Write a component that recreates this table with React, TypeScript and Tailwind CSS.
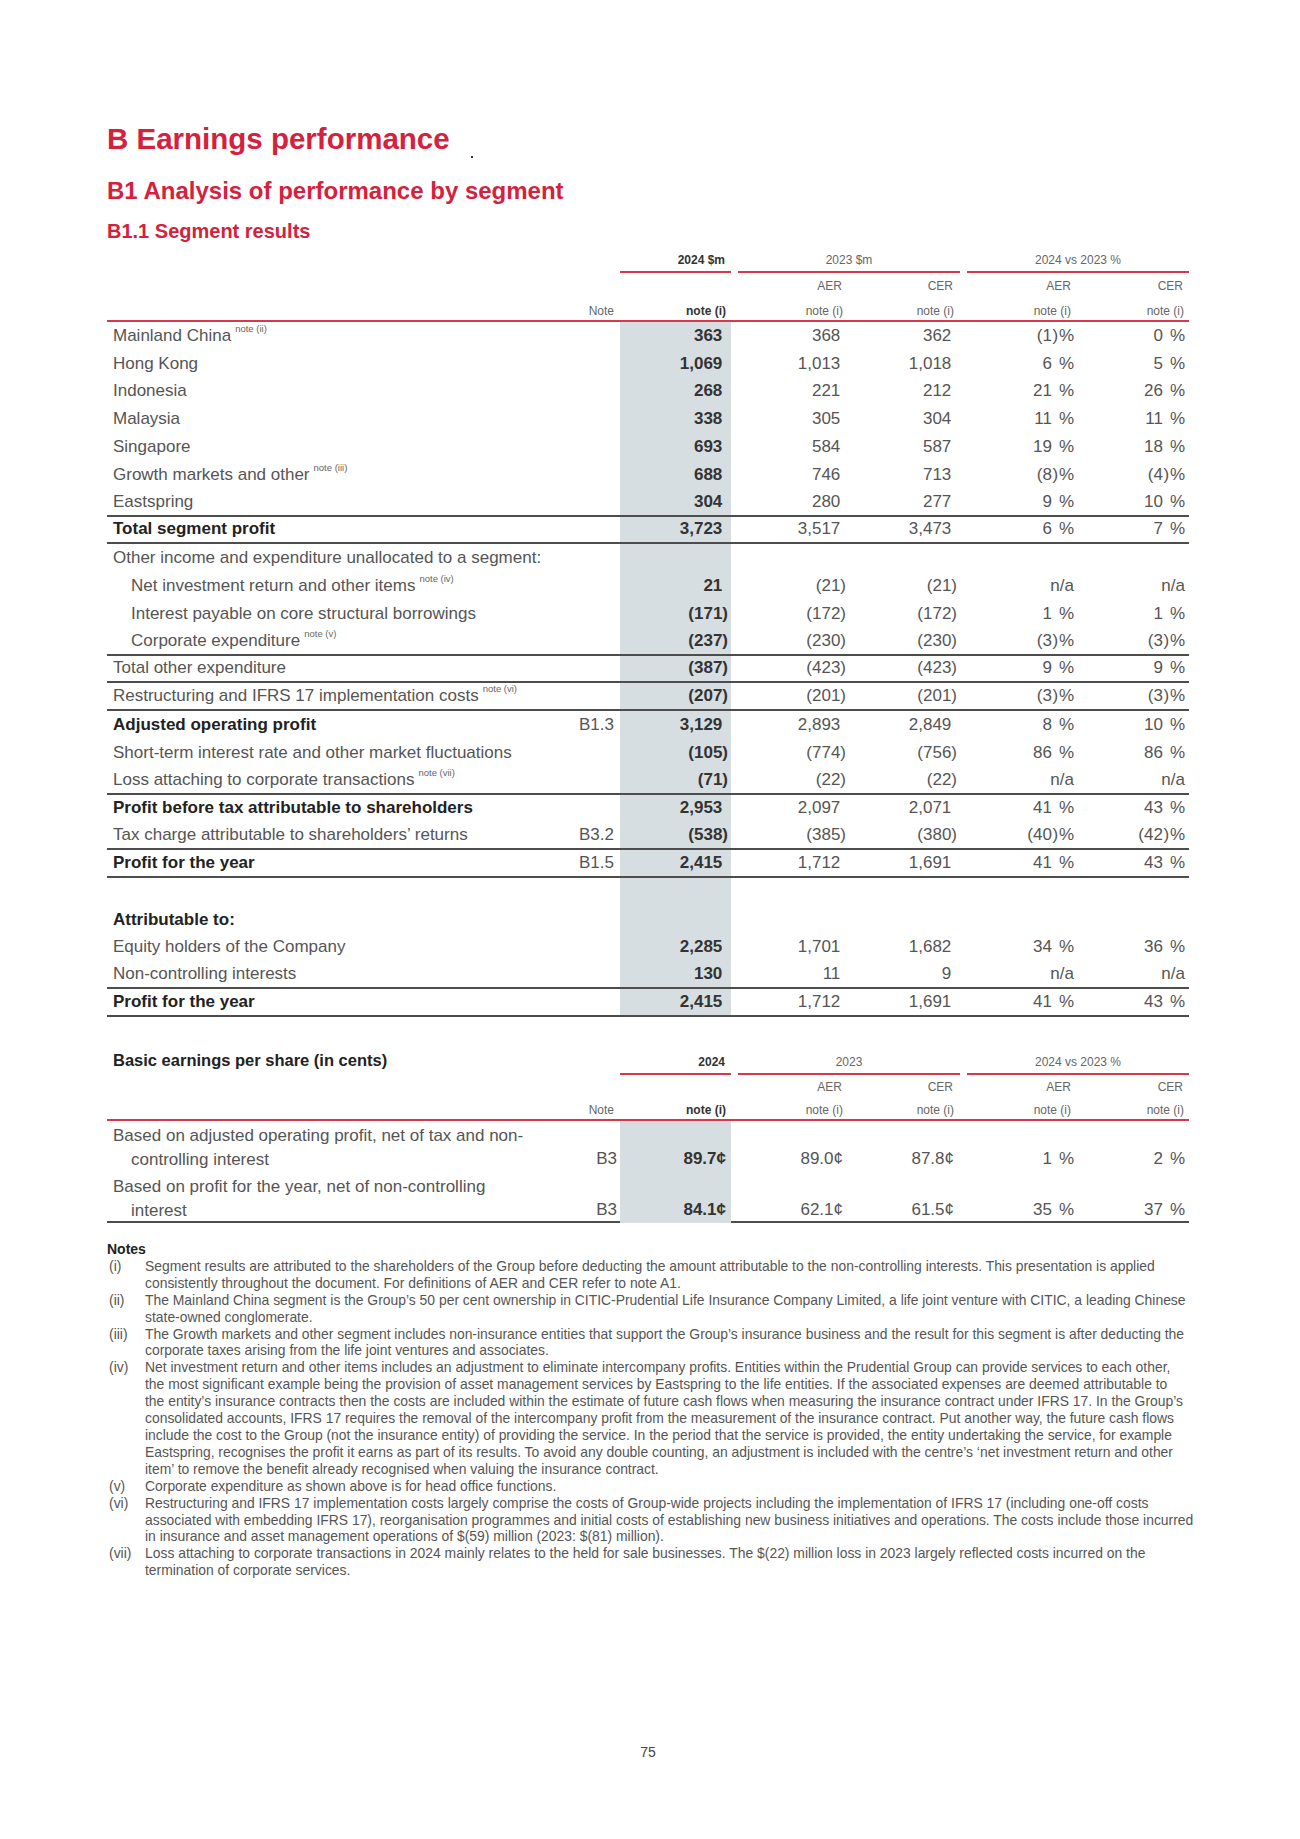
import React from 'react';

type R = {
  label?: string;
  sup?: string;
  note?: string;
  bold?: boolean;
  indent?: boolean;
  v?: [string, string, string, string, string];
  b?: boolean;
};

const rows: R[] = [
  { label: 'Mainland China', sup: 'note (ii)', v: ['363', '368', '362', '(1)', '0'] },
  { label: 'Hong Kong', v: ['1,069', '1,013', '1,018', '6', '5'] },
  { label: 'Indonesia', v: ['268', '221', '212', '21', '26'] },
  { label: 'Malaysia', v: ['338', '305', '304', '11', '11'] },
  { label: 'Singapore', v: ['693', '584', '587', '19', '18'] },
  { label: 'Growth markets and other', sup: 'note (iii)', v: ['688', '746', '713', '(8)', '(4)'] },
  { label: 'Eastspring', v: ['304', '280', '277', '9', '10'], b: true },
  { label: 'Total segment profit', bold: true, v: ['3,723', '3,517', '3,473', '6', '7'], b: true },
  { label: 'Other income and expenditure unallocated to a segment:' },
  { label: 'Net investment return and other items', sup: 'note (iv)', indent: true, v: ['21', '(21)', '(21)', 'n/a', 'n/a'] },
  { label: 'Interest payable on core structural borrowings', indent: true, v: ['(171)', '(172)', '(172)', '1', '1'] },
  { label: 'Corporate expenditure', sup: 'note (v)', indent: true, v: ['(237)', '(230)', '(230)', '(3)', '(3)'], b: true },
  { label: 'Total other expenditure', v: ['(387)', '(423)', '(423)', '9', '9'], b: true },
  { label: 'Restructuring and IFRS 17 implementation costs', sup: 'note (vi)', v: ['(207)', '(201)', '(201)', '(3)', '(3)'], b: true },
  { label: 'Adjusted operating profit', bold: true, note: 'B1.3', v: ['3,129', '2,893', '2,849', '8', '10'] },
  { label: 'Short-term interest rate and other market fluctuations', v: ['(105)', '(774)', '(756)', '86', '86'] },
  { label: 'Loss attaching to corporate transactions', sup: 'note (vii)', v: ['(71)', '(22)', '(22)', 'n/a', 'n/a'], b: true },
  { label: 'Profit before tax attributable to shareholders', bold: true, v: ['2,953', '2,097', '2,071', '41', '43'] },
  { label: 'Tax charge attributable to shareholders\u2019 returns', note: 'B3.2', v: ['(538)', '(385)', '(380)', '(40)', '(42)'], b: true },
  { label: 'Profit for the year', bold: true, note: 'B1.5', v: ['2,415', '1,712', '1,691', '41', '43'], b: true },
  {},
  { label: 'Attributable to:', bold: true },
  { label: 'Equity holders of the Company', v: ['2,285', '1,701', '1,682', '34', '36'] },
  { label: 'Non-controlling interests', v: ['130', '11', '9', 'n/a', 'n/a'], b: true },
  { label: 'Profit for the year', bold: true, v: ['2,415', '1,712', '1,691', '41', '43'], b: true },
];

const notes: { n: string; lines: string[] }[] = [
  {
    n: '(i)',
    lines: [
      'Segment results are attributed to the shareholders of the Group before deducting the amount attributable to the non-controlling interests. This presentation is applied',
      'consistently throughout the document. For definitions of AER and CER refer to note A1.',
    ],
  },
  {
    n: '(ii)',
    lines: [
      'The Mainland China segment is the Group\u2019s 50 per cent ownership in CITIC-Prudential Life Insurance Company Limited, a life joint venture with CITIC, a leading Chinese',
      'state-owned conglomerate.',
    ],
  },
  {
    n: '(iii)',
    lines: [
      'The Growth markets and other segment includes non-insurance entities that support the Group\u2019s insurance business and the result for this segment is after deducting the',
      'corporate taxes arising from the life joint ventures and associates.',
    ],
  },
  {
    n: '(iv)',
    lines: [
      'Net investment return and other items includes an adjustment to eliminate intercompany profits. Entities within the Prudential Group can provide services to each other,',
      'the most significant example being the provision of asset management services by Eastspring to the life entities. If the associated expenses are deemed attributable to',
      'the entity\u2019s insurance contracts then the costs are included within the estimate of future cash flows when measuring the insurance contract under IFRS 17. In the Group\u2019s',
      'consolidated accounts, IFRS 17 requires the removal of the intercompany profit from the measurement of the insurance contract. Put another way, the future cash flows',
      'include the cost to the Group (not the insurance entity) of providing the service. In the period that the service is provided, the entity undertaking the service, for example',
      'Eastspring, recognises the profit it earns as part of its results. To avoid any double counting, an adjustment is included with the centre\u2019s \u2018net investment return and other',
      'item\u2019 to remove the benefit already recognised when valuing the insurance contract.',
    ],
  },
  { n: '(v)', lines: ['Corporate expenditure as shown above is for head office functions.'] },
  {
    n: '(vi)',
    lines: [
      'Restructuring and IFRS 17 implementation costs largely comprise the costs of Group-wide projects including the implementation of IFRS 17 (including one-off costs',
      'associated with embedding IFRS 17), reorganisation programmes and initial costs of establishing new business initiatives and operations. The costs include those incurred',
      'in insurance and asset management operations of $(59) million (2023: $(81) million).',
    ],
  },
  {
    n: '(vii)',
    lines: [
      'Loss attaching to corporate transactions in 2024 mainly relates to the held for sale businesses. The $(22) million loss in 2023 largely reflected costs incurred on the',
      'termination of corporate services.',
    ],
  },
];

const COLS = 'grid grid-cols-[453px_60px_111px_7px_111px_111px_7px_111px_111px]';
const RED = 'border-[#d7384b]';
const DARK = 'border-[#4d4d4d]';
const SHADE = 'bg-[#d7dee1]';

function Money({ v }: { v: string }) {
  if (v.startsWith('(')) return <>{v}</>;
  return (
    <>
      {v}
      <span className="invisible">)</span>
    </>
  );
}

function Pct({ v }: { v: string }) {
  if (v === 'n/a') return <>n/a</>;
  const neg = v.startsWith('(');
  const core = neg ? v.slice(0, v.length - 1) : v;
  return (
    <>
      {core}
      <span className="inline-block w-[7px] text-center">{neg ? ')' : ''}</span>%
    </>
  );
}

function SubHeader({ compact }: { compact?: boolean }) {
  return (
    <>
      <div className={`${COLS} ${compact ? 'h-[24px]' : 'h-[26px]'} text-[12px] leading-[14px] text-[#666]`}>
        <div />
        <div />
        <div />
        <div />
        <div className="flex items-center justify-end pr-[7px]">AER</div>
        <div className="flex items-center justify-end pr-[7px]">CER</div>
        <div />
        <div className="flex items-center justify-end pr-[7px]">AER</div>
        <div className="flex items-center justify-end pr-[6px]">CER</div>
      </div>
      <div className={`${COLS} ${compact ? 'h-[22px]' : 'h-[23px]'} border-b-2 ${RED} text-[12px] leading-[14px] text-[#666]`}>
        <div />
        <div className="flex items-end justify-end pr-[6px] pb-[2px]">Note</div>
        <div className="flex items-end justify-end pr-[5px] pb-[2px] font-bold text-[#333]">note (i)</div>
        <div />
        <div className="flex items-end justify-end pr-[6px] pb-[2px]">note (i)</div>
        <div className="flex items-end justify-end pr-[6px] pb-[2px]">note (i)</div>
        <div />
        <div className="flex items-end justify-end pr-[7px] pb-[2px]">note (i)</div>
        <div className="flex items-end justify-end pr-[5px] pb-[2px]">note (i)</div>
      </div>
    </>
  );
}

function Row({ r }: { r: R }) {
  const cell = 'flex items-center justify-end';
  return (
    <div className={`${COLS} h-[27.8px] text-[17px] leading-[20px] ${r.b ? `border-b-2 ${DARK}` : ''}`}>
      <div
        className={`flex items-center whitespace-nowrap ${r.indent ? 'pl-[24px]' : 'pl-[6px]'} ${
          r.bold ? 'font-bold text-[#222]' : 'text-[#555]'
        }`}
      >
        {r.label}
        {r.sup && (
          <sup className="ml-[4px] text-[9.5px] font-normal text-[#666] top-[-7px]">{r.sup}</sup>
        )}
      </div>
      <div className={`${cell} pr-[6px] text-[#555]`}>{r.note}</div>
      <div className={`${cell} pr-[3px] ${SHADE} font-bold text-[#333]`}>{r.v && <Money v={r.v[0]} />}</div>
      <div />
      <div className={`${cell} pr-[3px] text-[#555]`}>{r.v && <Money v={r.v[1]} />}</div>
      <div className={`${cell} pr-[3px] text-[#555]`}>{r.v && <Money v={r.v[2]} />}</div>
      <div />
      <div className={`${cell} pr-[4px] text-[#555]`}>{r.v && <Pct v={r.v[3]} />}</div>
      <div className={`${cell} pr-[4px] text-[#555]`}>{r.v && <Pct v={r.v[4]} />}</div>
    </div>
  );
}

function EpsRow({
  l1,
  l2,
  v,
  last,
}: {
  l1: string;
  l2: string;
  v: [string, string, string, string, string];
  last?: boolean;
}) {
  const cell = 'flex items-end justify-end pb-[1px]';
  return (
    <div className={`${COLS} h-[51px] text-[17px] leading-[24px] ${last ? `border-b-2 ${DARK}` : ''}`}>
      <div className="pt-[3px] whitespace-nowrap text-[#555]">
        <div className="pl-[6px]">{l1}</div>
        <div className="pl-[24px]">{l2}</div>
      </div>
      <div className={`${cell} pr-[3px] text-[#555]`}>B3</div>
      <div className={`${cell} pr-[5px] ${SHADE} font-bold text-[#333]`}>{v[0]}</div>
      <div />
      <div className={`${cell} pr-[6px] text-[#555]`}>{v[1]}</div>
      <div className={`${cell} pr-[6px] text-[#555]`}>{v[2]}</div>
      <div />
      <div className={`${cell} pr-[4px] text-[#555]`}>
        <Pct v={v[3]} />
      </div>
      <div className={`${cell} pr-[4px] text-[#555]`}>
        <Pct v={v[4]} />
      </div>
    </div>
  );
}

export default function App() {
  return (
    <div className="min-h-[1839px] w-full bg-white font-['Liberation_Sans',Arial,sans-serif] text-[#555]">
      <div className="pl-[107px] pt-[121px]">
        <div className="flex items-start">
          <h1 className="text-[29.5px] leading-[36px] font-bold text-[#d4213d] whitespace-nowrap">B Earnings performance</h1>
          <span className="ml-[21px] mt-[35px] block w-[2px] h-[2px] bg-[#333]" />
        </div>
        <h2 className="mt-[18px] text-[24px] leading-[30px] font-bold text-[#d4213d] whitespace-nowrap">
          B1 Analysis of performance by segment
        </h2>
        <h3 className="mt-[12px] text-[20px] leading-[26px] font-bold text-[#d4213d] whitespace-nowrap">
          B1.1 Segment results
        </h3>

        {/* Segment results table */}
        <div className="mt-[2px] w-[1082px]">
          <div className={`${COLS} h-[27px] text-[12px] leading-[14px] text-[#666]`}>
            <div className="col-span-2" />
            <div className={`flex items-end justify-end pr-[6px] pb-[4px] border-b-2 ${RED} font-bold text-[#333]`}>
              2024 $m
            </div>
            <div />
            <div className={`col-span-2 flex items-end justify-center pb-[4px] border-b-2 ${RED}`}>2023 $m</div>
            <div />
            <div className={`col-span-2 flex items-end justify-center pb-[4px] border-b-2 ${RED}`}>2024 vs 2023 %</div>
          </div>
          <SubHeader />
          {rows.map((r, i) => (
            <Row key={i} r={r} />
          ))}
        </div>

        {/* EPS table */}
        <div className="mt-[33px] w-[1082px]">
          <div className={`${COLS} h-[25px] text-[12px] leading-[14px] text-[#666]`}>
            <div className="col-span-2 pl-[6px] text-[16.5px] leading-[20px] font-bold text-[#222] whitespace-nowrap">
              Basic earnings per share (in cents)
            </div>
            <div className={`flex items-end justify-end pr-[6px] pb-[4px] border-b-2 ${RED} font-bold text-[#333]`}>
              2024
            </div>
            <div />
            <div className={`col-span-2 flex items-end justify-center pb-[4px] border-b-2 ${RED}`}>2023</div>
            <div />
            <div className={`col-span-2 flex items-end justify-center pb-[4px] border-b-2 ${RED}`}>2024 vs 2023 %</div>
          </div>
          <SubHeader compact />
          <EpsRow
            l1="Based on adjusted operating profit, net of tax and non-"
            l2="controlling interest"
            v={['89.7\u00a2', '89.0\u00a2', '87.8\u00a2', '1', '2']}
          />
          <EpsRow
            l1="Based on profit for the year, net of non-controlling"
            l2="interest"
            v={['84.1\u00a2', '62.1\u00a2', '61.5\u00a2', '35', '37']}
            last
          />
        </div>

        {/* Notes */}
        <div className="mt-[18px] text-[13.9px] leading-[16.9px] text-[#555]">
          <div className="text-[14px] leading-[17px] font-bold text-[#222]">Notes</div>
          {notes.map((n) => (
            <div key={n.n} className="flex">
              <div className="w-[38px] shrink-0 pl-[2px]">{n.n}</div>
              <div>
                {n.lines.map((l, i) => (
                  <div key={i} className="whitespace-nowrap">
                    {l}
                  </div>
                ))}
              </div>
            </div>
          ))}
        </div>
      </div>

      <div className="mt-[165px] text-center text-[14px] leading-[17px] text-[#444]">
        <span className="inline-block ml-[-4px]">75</span>
      </div>
    </div>
  );
}
